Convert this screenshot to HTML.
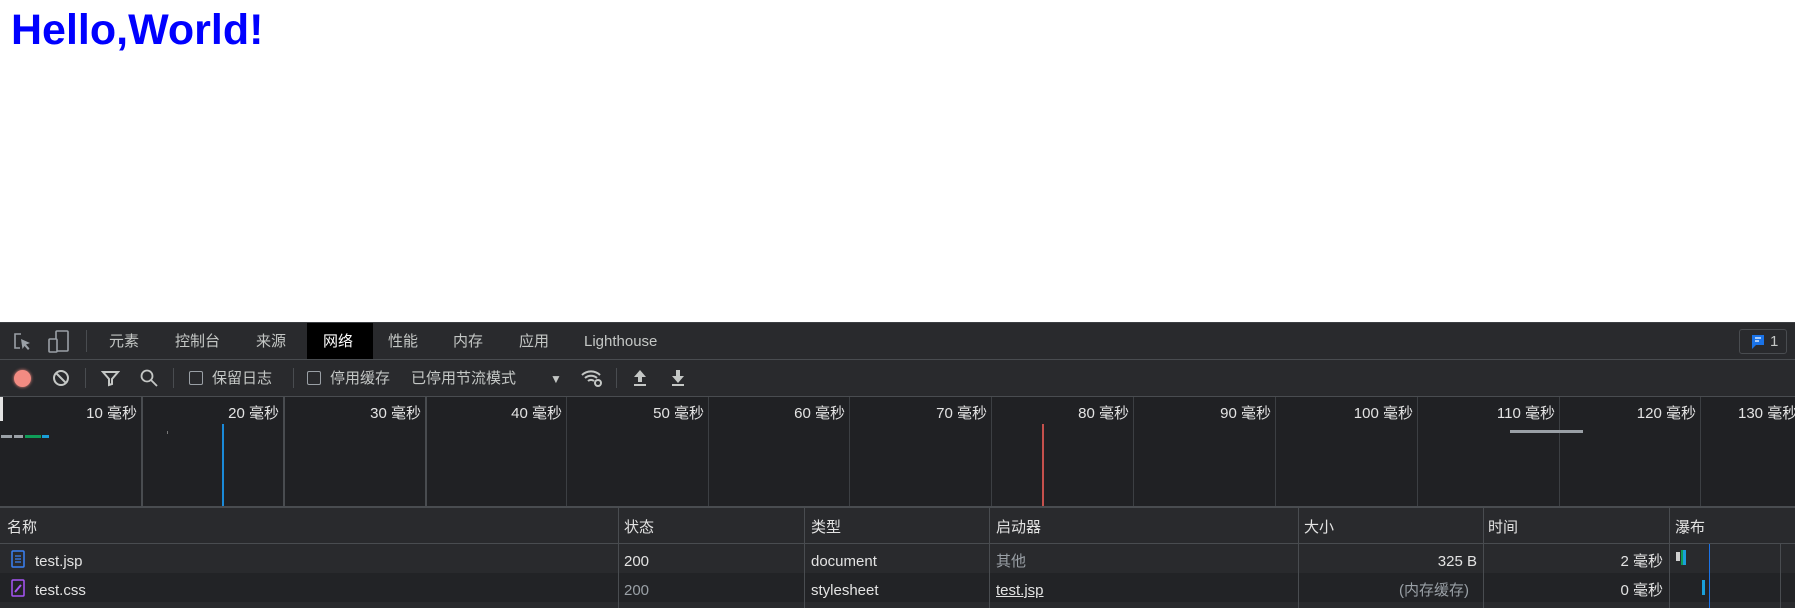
<!DOCTYPE html>
<html><head><meta charset="utf-8"><style>
*{margin:0;padding:0;box-sizing:border-box}
body{width:1795px;height:608px;overflow:hidden;background:#fff;position:relative;font-family:"Liberation Sans","Noto Sans CJK SC",sans-serif}
.a{position:absolute;white-space:nowrap}
h1{position:absolute;left:11px;top:6px;font-size:43px;font-weight:bold;color:#0000ff;font-family:"Liberation Sans",sans-serif}
#dt{position:absolute;left:0;top:322px;width:1795px;height:286px;background:#292a2d;color:#e3e3e3;font-size:15px;line-height:22px}
.t{color:#c4c7c5;top:9px}
.ln{position:absolute;background:#494c50}
.lbl{position:absolute;top:81px;font-size:15px;color:#e3e3e3;text-align:right}
</style></head><body>
<h1>Hello,World!</h1>
<div id="dt">
 <div class="ln" style="left:0;top:0;width:1795px;height:1px;background:#3c3f43"></div>
 <svg class="a" style="left:12px;top:9px" width="22" height="22" viewBox="0 0 22 22"><path d="M9 3H3v14h5" fill="none" stroke="#9aa0a6" stroke-width="1.6"/><path d="M9 8l9 4-4 1.5 3.5 4-1.5 1.5-3.5-4-2 3z" fill="#9aa0a6"/></svg>
 <svg class="a" style="left:47px;top:7px" width="24" height="26" viewBox="0 0 24 26"><rect x="9" y="2" width="12" height="20" rx="1" fill="none" stroke="#9aa0a6" stroke-width="1.6"/><rect x="2" y="10" width="8" height="13" rx="1" fill="#292a2d" stroke="#9aa0a6" stroke-width="1.6"/></svg>
 <div class="ln" style="left:86px;top:8px;width:1px;height:22px"></div>
 <div class="a t" style="left:109px">元素</div>
 <div class="a t" style="left:175px">控制台</div>
 <div class="a t" style="left:256px">来源</div>
 <div class="a" style="left:307px;top:1px;width:66px;height:36px;background:#000"></div>
 <div class="a t" style="left:323px;color:#fff">网络</div>
 <div class="a t" style="left:388px">性能</div>
 <div class="a t" style="left:453px">内存</div>
 <div class="a t" style="left:519px">应用</div>
 <div class="a t" style="left:584px">Lighthouse</div>
 <div class="a" style="left:1739px;top:7px;width:48px;height:25px;border:1px solid #494c50;border-radius:3px"></div>
 <svg class="a" style="left:1750px;top:12px" width="16" height="16" viewBox="0 0 16 16"><path d="M2 1h12v10H6l-4 4z" fill="#1a73e8"/><path d="M5 4h6M5 7h4" stroke="#fff" stroke-width="1.3"/></svg>
 <div class="a" style="left:1770px;top:9px;color:#c4c7c5">1</div>
 <div class="ln" style="left:0;top:37px;width:1795px;height:1px"></div>
 <div class="a" style="left:14px;top:48px;width:17px;height:17px;border-radius:50%;background:#f28b82;box-shadow:0 0 3px #f28b82"></div>
 <svg class="a" style="left:52px;top:47px" width="18" height="18" viewBox="0 0 18 18"><circle cx="9" cy="9" r="7" fill="none" stroke="#c4c7c5" stroke-width="2"/><path d="M4 4l10 10" stroke="#c4c7c5" stroke-width="2"/></svg>
 <div class="ln" style="left:85px;top:46px;width:1px;height:20px"></div>
 <svg class="a" style="left:101px;top:47px" width="19" height="18" viewBox="0 0 19 18"><path d="M2 3h15l-6 7v5l-3 1v-6z" fill="none" stroke="#c4c7c5" stroke-width="2"/></svg>
 <svg class="a" style="left:139px;top:46px" width="20" height="20" viewBox="0 0 20 20"><circle cx="8" cy="8" r="5.5" fill="none" stroke="#c4c7c5" stroke-width="1.8"/><path d="M12 12l6 6" stroke="#c4c7c5" stroke-width="1.8"/></svg>
 <div class="ln" style="left:173px;top:46px;width:1px;height:20px"></div>
 <div class="a" style="left:189px;top:49px;width:14px;height:14px;border:1.5px solid #9aa0a6;border-radius:2px"></div>
 <div class="a" style="left:212px;top:46px;color:#c4c7c5">保留日志</div>
 <div class="ln" style="left:293px;top:46px;width:1px;height:20px"></div>
 <div class="a" style="left:307px;top:49px;width:14px;height:14px;border:1.5px solid #9aa0a6;border-radius:2px"></div>
 <div class="a" style="left:330px;top:46px;color:#c4c7c5">停用缓存</div>
 <div class="a" style="left:411px;top:46px;color:#c4c7c5">已停用节流模式</div>
 <div class="a" style="left:550px;top:46px;color:#c4c7c5;font-size:12px">▼</div>
 <svg class="a" style="left:580px;top:46px" width="24" height="20" viewBox="0 0 24 20"><path d="M2 7a13 13 0 0 1 18 0M5 10a9 9 0 0 1 12 0M8 13a4.5 4.5 0 0 1 6 0" fill="none" stroke="#c4c7c5" stroke-width="2"/><circle cx="18" cy="15" r="3" fill="none" stroke="#c4c7c5" stroke-width="2"/></svg>
 <div class="ln" style="left:616px;top:46px;width:1px;height:20px"></div>
 <svg class="a" style="left:632px;top:47px" width="16" height="18" viewBox="0 0 16 18"><path d="M8 1l6 7H10v5H6V8H2z M2 15h12v2H2z" fill="#c4c7c5"/></svg>
 <svg class="a" style="left:670px;top:47px" width="16" height="18" viewBox="0 0 16 18"><path d="M6 1h4v6h4l-6 7-6-7h4z M2 15h12v2H2z" fill="#c4c7c5"/></svg>
 <div class="ln" style="left:0;top:74px;width:1795px;height:1px"></div>
 <div class="a" style="left:0;top:75px;width:1795px;height:109px;background:#202124"></div>
 <div class="a" style="left:0;top:75px;width:3px;height:24px;background:#e3e3e3"></div>
 <div class="ln" style="left:141px;top:75px;width:2px;height:109px"></div>
 <div class="ln" style="left:283px;top:75px;width:2px;height:109px"></div>
 <div class="ln" style="left:425px;top:75px;width:2px;height:109px"></div>
 <div class="ln" style="left:566px;top:75px;width:1px;height:109px;background:#3c3f43"></div>
 <div class="ln" style="left:708px;top:75px;width:1px;height:109px;background:#3c3f43"></div>
 <div class="ln" style="left:849px;top:75px;width:1px;height:109px;background:#3c3f43"></div>
 <div class="ln" style="left:991px;top:75px;width:1px;height:109px;background:#3c3f43"></div>
 <div class="ln" style="left:1133px;top:75px;width:1px;height:109px;background:#3c3f43"></div>
 <div class="ln" style="left:1275px;top:75px;width:1px;height:109px;background:#3c3f43"></div>
 <div class="ln" style="left:1417px;top:75px;width:1px;height:109px;background:#3c3f43"></div>
 <div class="ln" style="left:1559px;top:75px;width:1px;height:109px;background:#3c3f43"></div>
 <div class="ln" style="left:1700px;top:75px;width:1px;height:109px;background:#3c3f43"></div>
 <div class="lbl" style="left:37px;width:100px">10 毫秒</div>
 <div class="lbl" style="left:179px;width:100px">20 毫秒</div>
 <div class="lbl" style="left:321px;width:100px">30 毫秒</div>
 <div class="lbl" style="left:462px;width:100px">40 毫秒</div>
 <div class="lbl" style="left:604px;width:100px">50 毫秒</div>
 <div class="lbl" style="left:745px;width:100px">60 毫秒</div>
 <div class="lbl" style="left:887px;width:100px">70 毫秒</div>
 <div class="lbl" style="left:1029px;width:100px">80 毫秒</div>
 <div class="lbl" style="left:1171px;width:100px">90 毫秒</div>
 <div class="lbl" style="left:1313px;width:100px">100 毫秒</div>
 <div class="lbl" style="left:1455px;width:100px">110 毫秒</div>
 <div class="lbl" style="left:1596px;width:100px">120 毫秒</div>
 <div class="a" style="left:1738px;top:81px">130 毫秒</div>
 <div class="a" style="left:1px;top:113px;width:11px;height:3px;background:#9aa0a6"></div>
 <div class="a" style="left:14px;top:113px;width:9px;height:3px;background:#9aa0a6"></div>
 <div class="a" style="left:25px;top:113px;width:16px;height:3px;background:#0f9d58"></div>
 <div class="a" style="left:42px;top:113px;width:7px;height:3px;background:#1a9fd9"></div>
 <div class="a" style="left:167px;top:109px;width:1px;height:3px;background:#777"></div>
 <div class="a" style="left:222px;top:102px;width:2px;height:82px;background:#1a8ad9"></div>
 <div class="a" style="left:1042px;top:102px;width:2px;height:82px;background:#c5504c"></div>
 <div class="a" style="left:1510px;top:108px;width:73px;height:3px;background:#9aa0a6"></div>
 <div class="ln" style="left:0;top:184px;width:1795px;height:2px"></div>
 <div class="ln" style="left:0;top:221px;width:1795px;height:1px"></div>
 <div class="a" style="left:0;top:222px;width:1795px;height:29px;background:#292a2d"></div>
 <div class="a" style="left:0;top:251px;width:1795px;height:29px;background:#222326"></div>
 <div class="ln" style="left:618px;top:186px;width:1px;height:100px"></div>
 <div class="ln" style="left:804px;top:186px;width:1px;height:100px"></div>
 <div class="ln" style="left:989px;top:186px;width:1px;height:100px"></div>
 <div class="ln" style="left:1298px;top:186px;width:1px;height:100px"></div>
 <div class="ln" style="left:1483px;top:186px;width:1px;height:100px"></div>
 <div class="ln" style="left:1669px;top:186px;width:1px;height:100px"></div>
 <div class="a" style="left:1709px;top:222px;width:1px;height:64px;background:#1a73e8"></div>
 <div class="ln" style="left:1780px;top:222px;width:1px;height:64px"></div>
 <div class="a" style="left:7px;top:195px">名称</div>
 <div class="a" style="left:624px;top:195px">状态</div>
 <div class="a" style="left:811px;top:195px">类型</div>
 <div class="a" style="left:996px;top:195px">启动器</div>
 <div class="a" style="left:1304px;top:195px">大小</div>
 <div class="a" style="left:1488px;top:195px">时间</div>
 <div class="a" style="left:1675px;top:195px">瀑布</div>
 <svg class="a" style="left:11px;top:228px" width="14" height="18" viewBox="0 0 14 18"><rect x="1" y="1" width="12" height="16" rx="1" fill="none" stroke="#3b82f6" stroke-width="1.5"/><path d="M4 6h6M4 9h6M4 12h6" stroke="#3b82f6" stroke-width="1.3"/></svg>
 <svg class="a" style="left:11px;top:257px" width="14" height="18" viewBox="0 0 14 18"><rect x="1" y="1" width="12" height="16" rx="1" fill="none" stroke="#a855f7" stroke-width="1.5"/><path d="M4 13l6-7" stroke="#a855f7" stroke-width="2"/></svg>
 <div class="a" style="left:35px;top:229px">test.jsp</div>
 <div class="a" style="left:35px;top:258px">test.css</div>
 <div class="a" style="left:624px;top:229px">200</div>
 <div class="a" style="left:624px;top:258px;color:#9aa0a6">200</div>
 <div class="a" style="left:811px;top:229px">document</div>
 <div class="a" style="left:811px;top:258px">stylesheet</div>
 <div class="a" style="left:996px;top:229px;color:#9aa0a6">其他</div>
 <div class="a" style="left:996px;top:258px;text-decoration:underline">test.jsp</div>
 <div class="a" style="left:1300px;width:177px;text-align:right;top:229px">325 B</div>
 <div class="a" style="left:1300px;width:169px;text-align:right;top:258px;color:#9aa0a6">(内存缓存)</div>
 <div class="a" style="left:1485px;width:178px;text-align:right;top:229px">2 毫秒</div>
 <div class="a" style="left:1485px;width:178px;text-align:right;top:258px">0 毫秒</div>
 <div class="a" style="left:1676px;top:230px;width:4px;height:9px;background:#d0d0d0"></div>
 <div class="a" style="left:1681px;top:228px;width:2px;height:15px;background:#0f9d58"></div>
 <div class="a" style="left:1683px;top:228px;width:3px;height:15px;background:#1a9fd9"></div>
 <div class="a" style="left:1702px;top:258px;width:3px;height:15px;background:#1a9fd9"></div>
</div>
</body></html>
